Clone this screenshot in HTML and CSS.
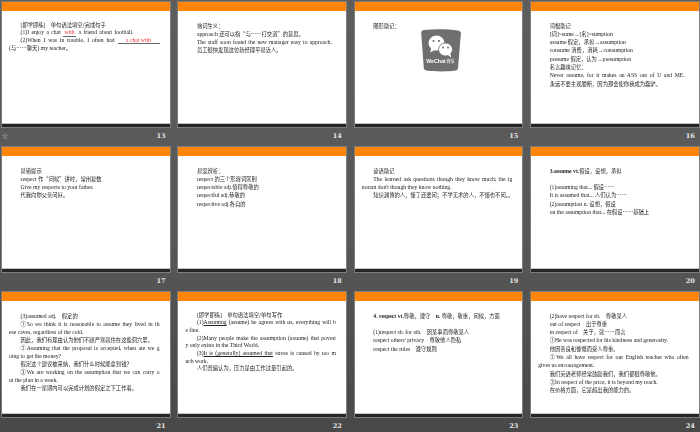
FILE: index.html
```html
<!DOCTYPE html>
<html lang="zh-CN">
<head>
<meta charset="utf-8">
<title>Slides 13-24</title>
<link rel="stylesheet" href="styles.css">
</head>
<body>
<main class="sorter">
  <section class="item">
    <div class="slide"><div class="band"></div>
      <div class="content dense">
        <p class="ind">[<span class="zh">即学即练</span>]<span class="zh">　单句语法填空/完成句子</span></p>
        <p class="ind j tight">(1)I enjoy a chat <span class="blank short">with</span> a friend about football.</p>
        <p class="ind j">(2)When I was in trouble, I often had <span class="blank long">a chat with</span></p>
        <p>(<span class="zh">与……聊天</span>) my teacher<span class="zh">。</span></p>
      </div>
      <div class="foot"></div></div>
    <div class="cap"><span class="mark">☆</span><span class="num">13</span></div>
  </section>
  <section class="item">
    <div class="slide"><div class="band"></div>
      <div class="content wide snug">
        <p><span class="zh">熟词生义：</span></p>
        <p>approach <span class="zh">还可以指“与……打交道”的意思。</span></p>
        <p class="j">The staff soon found the new manager easy to approach.</p>
        <p><span class="zh">员工很快发现这位新经理平易近人。</span></p>
      </div>
      <div class="foot"></div></div>
    <div class="cap"><span class="num">14</span></div>
  </section>
  <section class="item">
    <div class="slide"><div class="band"></div>
      <div class="content wide">
        <p><span class="zh">图形助记：</span></p>
        <div class="logo">
          <svg class="logo-art" viewBox="0 0 40 43" aria-hidden="true">
            <path d="M3 1C14 0 27 0 37 1.500c2 .3 3 1.500 2.900 3L37 39c-.1 1.500-1 2.300-2.500 2.500-9 1.200-20 1.200-29 0C4 41.300 3 40.500 2.800 39L.2 4.500C.1 2.500 1.200 1.200 3 1Z" fill="#6f6f6f"/>
            <ellipse cx="15.500" cy="14" rx="8" ry="7.500" fill="#fff"/>
            <path d="M10.500 19l-1.500 4.500 5-2.500Z" fill="#fff"/>
            <ellipse cx="24.500" cy="20.500" rx="7" ry="6.500" fill="#fff" stroke="#6f6f6f" stroke-width="0.800"/>
            <path d="M27 26l3 2.500-.5-4Z" fill="#fff"/>
            <circle cx="12.500" cy="12" r="1.100" fill="#6f6f6f"/><circle cx="18" cy="12" r="1.100" fill="#6f6f6f"/>
            <circle cx="22" cy="18.500" r="1" fill="#6f6f6f"/><circle cx="27" cy="18.500" r="1" fill="#6f6f6f"/>
          </svg>
          <span class="logo-text">WeChat<small>微信</small></span>
        </div>
      </div>
      <div class="foot"></div></div>
    <div class="cap"><span class="num">15</span></div>
  </section>
  <section class="item">
    <div class="slide"><div class="band"></div>
      <div class="content wide">
        <p><span class="zh">词根助记</span></p>
        <p>[<span class="zh">词</span>]~sume→[<span class="zh">名</span>]~sumption</p>
        <p>assume <span class="zh">假定，承担</span>→assumption</p>
        <p>consume <span class="zh">消费，消耗</span>→consumption</p>
        <p>presume <span class="zh">假定，认为</span>→presumption</p>
        <p><span class="zh">名言趣味记忆：</span></p>
        <p class="j">Never assume, for it makes an ASS out of U and ME.</p>
        <p><span class="zh">永远不要主观臆断，因为那会使你我成为蠢驴。</span></p>
      </div>
      <div class="foot"></div></div>
    <div class="cap"><span class="num">16</span></div>
  </section>

  <section class="item">
    <div class="slide"><div class="band"></div>
      <div class="content wide">
        <p><span class="zh">易错提示</span></p>
        <p>respect <span class="zh">作“问候”讲时，常用复数</span></p>
        <p>Give my respects to your father.</p>
        <p><span class="zh">代我向你父亲问好。</span></p>
      </div>
      <div class="foot"></div></div>
    <div class="cap"><span class="num">17</span></div>
  </section>
  <section class="item">
    <div class="slide"><div class="band"></div>
      <div class="content wide">
        <p><span class="zh">易混辨析：</span></p>
        <p>respect <span class="zh">的三个形容词区别</span></p>
        <p>respectable adj.<span class="zh">值得尊敬的</span></p>
        <p>respectful adj.<span class="zh">恭敬的</span></p>
        <p>respective adj.<span class="zh">各自的</span></p>
      </div>
      <div class="foot"></div></div>
    <div class="cap"><span class="num">18</span></div>
  </section>
  <section class="item">
    <div class="slide"><div class="band"></div>
      <div class="content snug">
        <p class="ind"><span class="zh">谚语助记</span></p>
        <p class="ind j">The learned ask questions though they know much; the ig</p>
        <p>norant don't though they know nothing.</p>
        <p class="ind"><span class="zh">知识渊博的人，懂了还要问；不学无术的人，不懂也不问。。</span></p>
      </div>
      <div class="foot"></div></div>
    <div class="cap"><span class="num">19</span></div>
  </section>
  <section class="item">
    <div class="slide"><div class="band"></div>
      <div class="content wide">
        <p><b>3.assume vt.</b><span class="zh">假设，设想，承担</span></p>
        <p class="gap">(1)assuming that... <span class="zh">假设……</span></p>
        <p>It is assumed that... <span class="zh">人们认为……</span></p>
        <p>(2)assumption n. <span class="zh">设想，假设</span></p>
        <p>on the assumption that... <span class="zh">在假设……基础上</span></p>
      </div>
      <div class="foot"></div></div>
    <div class="cap"><span class="num">20</span></div>
  </section>

  <section class="item">
    <div class="slide"><div class="band"></div>
      <div class="content snug">
        <p class="ind">(3)assumed adj.<span class="zh">　假定的</span></p>
        <p class="ind j"><span class="zh">①</span>So we think it is reasonable to assume they lived in th</p>
        <p>ese caves, regardless of the cold.</p>
        <p class="ind"><span class="zh">因此，我们有理由认为他们不顾严寒就住在这些洞穴里。</span></p>
        <p class="ind j"><span class="zh">②</span>Assuming that the proposal is accepted, when are we g</p>
        <p>oing to get the money?</p>
        <p class="ind"><span class="zh">假定这个建议被采纳，我们什么时候能拿到钱？</span></p>
        <p class="ind j"><span class="zh">③</span>We are working on the assumption that we can carry o</p>
        <p>ut the plan in a week.</p>
        <p class="ind"><span class="zh">我们在一星期内可以完成计划的假定之下工作着。</span></p>
      </div>
      <div class="foot"></div></div>
    <div class="cap"><span class="num">21</span></div>
  </section>
  <section class="item">
    <div class="slide"><div class="band"></div>
      <div class="content dense">
        <p class="ind">[<span class="zh">即学即练</span>]<span class="zh">　单句语法填空/单句写作</span></p>
        <p class="ind j">(1)<u>Assuming</u> (assume) he agrees with us, everything will b</p>
        <p>e fine.</p>
        <p class="ind j">(2)Many people make the assumption (assume) that povert</p>
        <p>y only exists in the Third World.</p>
        <p class="ind j">(3)<u>It is (generally) assumed that</u> stress is caused by too m</p>
        <p>uch work.</p>
        <p class="ind"><span class="zh">人们普遍认为，压力是由工作过量引起的。</span></p>
      </div>
      <div class="foot"></div></div>
    <div class="cap"><span class="num">22</span></div>
  </section>
  <section class="item">
    <div class="slide"><div class="band"></div>
      <div class="content wide">
        <p><b>4. respect vt.</b><span class="zh">尊敬，遵守　</span><b>n.</b> <span class="zh">尊敬，敬重，问候，方面</span></p>
        <p class="gap">(1)respect sb. for sth.<span class="zh">　因某事而尊敬某人</span></p>
        <p>respect others' privacy<span class="zh">　尊敬他人隐私</span></p>
        <p>respect the rules<span class="zh">　遵守规则</span></p>
      </div>
      <div class="foot"></div></div>
    <div class="cap"><span class="num">23</span></div>
  </section>
  <section class="item">
    <div class="slide"><div class="band"></div>
      <div class="content">
        <p class="ind">(2)have respect for sb.<span class="zh">　尊敬某人</span></p>
        <p class="ind">out of respect<span class="zh">　出于尊重</span></p>
        <p class="ind">in respect of<span class="zh">　关于，就……而言</span></p>
        <p class="ind"><span class="zh">①</span>He was respected for his kindness and generosity.</p>
        <p class="ind"><span class="zh">他因善良和慷慨而受人尊重。</span></p>
        <p class="ind j"><span class="zh">②</span>We all have respect for our English teacher who often</p>
        <p>gives us encouragement.</p>
        <p class="ind"><span class="zh">我们英语老师经常鼓励我们，我们都很尊敬他。</span></p>
        <p class="ind"><span class="zh">③</span>In respect of the price, it is beyond my reach.</p>
        <p class="ind"><span class="zh">在价格方面，它是超出我的能力的。</span></p>
      </div>
      <div class="foot"></div></div>
    <div class="cap"><span class="num">24</span></div>
  </section>
</main>
</body>
</html>
```

FILE: styles.css
```css
* { box-sizing: border-box; }
html, body { margin: 0; padding: 0; }
body {
  width: 700px;
  height: 432px;
  overflow: hidden;
  background: linear-gradient(#5e5e5e, #565656 60%, #484848);
}
.sorter {
  display: grid;
  grid-template-columns: repeat(4, 167.5px);
  grid-auto-rows: 145px;
  column-gap: 8.9px;
  padding: 2px 0 0 2px;
}
.slide {
  height: 125px;
  display: flex;
  flex-direction: column;
  background: #fff;
  box-shadow: 0 0 0 1px #7d7d7d;
}
.band { height: 9px; flex: none; background: #ff8608; }
.content {
  flex: 1;
  padding: 10.5px 10px 0 7px;
  font: 5.7px/8.33px "Liberation Serif", "Noto Sans CJK SC", serif;
  color: #222;
  filter: blur(0.3px);
  overflow: hidden;
}
.content.wide { padding-left: 18.5px; padding-right: 14px; }
.content.snug { line-height: 8.08px; }
.content.dense { line-height: 7.7px; }
.content p { margin: 0; white-space: nowrap; }
.content .ind { padding-left: 11.5px; }
.content .j { white-space: normal; text-align: justify; text-align-last: justify; }
.content .tight { margin-right: 26px; }
.content .gap { margin-top: 8.33px; }
.zh { font-family: "Noto Sans CJK SC", sans-serif; font-size: 5.3px; }
.blank {
  display: inline-block;
  text-align: center;
  text-align-last: center;
  line-height: 7.5px;
  color: #e8313a;
  box-shadow: inset 0 -0.7px #333;
}
.blank.short { width: 13px; }
.blank.long { width: 42px; }
.logo {
  width: 40px;
  height: 43px;
  margin: -1px 0 0 48px;
  position: relative;
}
.logo-art { display: block; width: 40px; height: 43px; }
.logo-text {
  position: absolute;
  left: 5px;
  top: 29.5px;
  font: bold 5.2px/7px "Liberation Sans", "Noto Sans CJK SC", sans-serif;
  color: #fff;
  white-space: nowrap;
}
.logo-text small { font-size: 4px; font-weight: 400; margin-left: 1px; }
.foot {
  height: 4px;
  flex: none;
  background: #262626;
  border-top: 1px solid #c4c4c4;
}
.cap {
  display: flex;
  justify-content: space-between;
  height: 14px;
  margin-top: 4px;
  padding: 0 4px 0 0;
  color: #e8e8e8;
  font: bold 6.5px/10px "DejaVu Serif", serif;
}
.cap .num { margin-left: auto; }
.mark { font: 6px/10px "Noto Sans CJK SC", sans-serif; color: #ddd; }
```
